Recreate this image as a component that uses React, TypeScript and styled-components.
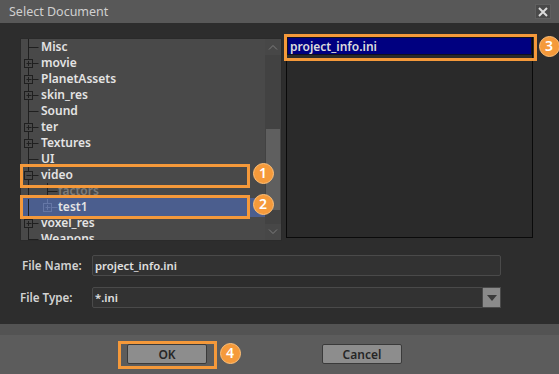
import React from 'react';
import styled, { createGlobalStyle } from 'styled-components';

const GlobalStyle = createGlobalStyle`
  html, body { margin: 0; padding: 0; background: #2d2d2d; }
  body { font-family: "Noto Sans", "DejaVu Sans", sans-serif; }
  * { box-sizing: border-box; }
`;

const Window = styled.div`
  position: relative;
  width: 559px;
  height: 374px;
  display: flex;
  flex-direction: column;
  background: #2d2d2d;
  overflow: hidden;
`;

const TitleBar = styled.div`
  flex: none;
  height: 23px;
  background: #585858;
  display: flex;
  align-items: center;
  justify-content: space-between;
  padding: 0 8px 0 9px;
  color: #d0d0d0;
  font-size: 12.5px;
`;

const CloseButton = styled.div`
  width: 16px;
  height: 15px;
  background: #4a4a4a;
  border: 1px solid #5f5f5f;
  display: flex;
  align-items: center;
  justify-content: center;
`;

const Body = styled.div`
  flex: 1;
  display: flex;
  flex-direction: column;
  padding: 13px 0 0 20px;
`;

const Panels = styled.div`
  display: flex;
  align-items: flex-start;
  gap: 4px;
`;

const TreePanel = styled.div`
  margin-top: 2px;
  width: 262px;
  height: 203px;
  border: 1px solid #2a2a2a;
  background: #494949;
  display: flex;
  overflow: hidden;
`;

const TreeList = styled.div`
  flex: 1;
  display: flex;
  flex-direction: column;
  overflow: hidden;
`;

const TreeRow = styled.div<{ $selected?: boolean; $dim?: boolean }>`
  flex: none;
  height: 16px;
  display: flex;
  align-items: center;
  background: ${(p) => (p.$selected ? '#4b5e8e' : 'transparent')};
  box-shadow: ${(p) => (p.$selected ? '0 -1px 0 #4b5e8e, 0 2px 0 #4b5e8e' : 'none')};
  color: ${(p) => (p.$dim ? '#7c7c7c' : '#e4e4e4')};
  font-size: 12px;
  font-weight: 600;
  line-height: 16px;
  white-space: nowrap;
`;

const Scrollbar = styled.div`
  flex: none;
  width: 16px;
  display: flex;
  flex-direction: column;
  background: #424242;
`;

const ScrollArrow = styled.div`
  flex: none;
  height: 16px;
  display: flex;
  align-items: center;
  justify-content: center;
  background: #474747;
`;

const ScrollTrack = styled.div`
  flex: 1;
  padding: 0 1px;
`;

const Thumb = styled.div<{ $offset: number; $size: number }>`
  margin-top: ${(p) => p.$offset}px;
  height: ${(p) => p.$size}px;
  background: #5f5f5f;
`;

const FileList = styled.div`
  width: 247px;
  height: 202px;
  border: 1px solid #0a0a0a;
  background: #2a2a2a;
  display: flex;
  flex-direction: column;
`;

const FileItem = styled.div<{ $selected?: boolean }>`
  height: 18px;
  display: flex;
  align-items: center;
  padding-left: 2px;
  background: ${(p) => (p.$selected ? '#000080' : 'transparent')};
  border: 1px solid ${(p) => (p.$selected ? '#101020' : 'transparent')};
  color: #dcdcdc;
  font-size: 12px;
  font-weight: 600;
`;

const Form = styled.div`
  margin-top: 14px;
  display: flex;
  flex-direction: column;
  gap: 11px;
`;

const FormRow = styled.div`
  display: flex;
  align-items: center;
  height: 21px;
`;

const Label = styled.div<{ $indent: number }>`
  width: 72px;
  padding-left: ${(p) => p.$indent}px;
  color: #d2d2d2;
  font-size: 11.6px;
  font-weight: 600;
  white-space: nowrap;
`;

const TextField = styled.div`
  width: 409px;
  height: 21px;
  border: 1px solid #4a4a4a;
  border-radius: 2px;
  background: #323232;
  display: flex;
  align-items: center;
  padding-left: 2px;
  color: #e0e0e0;
  font-size: 11.3px;
  font-weight: 600;
`;

const Combo = styled.div`
  width: 409px;
  height: 21px;
  display: flex;
`;

const ComboField = styled(TextField)`
  width: auto;
  flex: 1;
  border-radius: 2px 0 0 2px;
`;

const ComboButton = styled.div`
  width: 18px;
  height: 21px;
  background: #8a8a8a;
  border: 1px solid #4a4a4a;
  border-left: none;
  display: flex;
  align-items: center;
  justify-content: center;
`;

const ButtonBar = styled.div`
  flex: none;
  height: 50px;
  background: linear-gradient(#535353 0 11px, #5c5c5c 11px);
  display: flex;
  align-items: flex-start;
  padding: 20px 0 0 127px;
  gap: 115px;
`;

const Button = styled.div`
  width: 80px;
  height: 20px;
  background: #8d8d8d;
  border: 1px solid #3a3a3a;
  border-radius: 2px;
  display: flex;
  align-items: center;
  justify-content: center;
  color: #262626;
  font-size: 12px;
  font-weight: 600;
`;

const Callout = styled.div<{ $x: number; $y: number; $w: number; $h: number }>`
  position: absolute;
  left: ${(p) => p.$x}px;
  top: ${(p) => p.$y}px;
  width: ${(p) => p.$w}px;
  height: ${(p) => p.$h}px;
  border: 3px solid #f5993a;
  pointer-events: none;
`;

const Badge = styled.div<{ $cx: number; $cy: number }>`
  position: absolute;
  left: ${(p) => p.$cx - 10.5}px;
  top: ${(p) => p.$cy - 10.5}px;
  width: 21px;
  height: 21px;
  border-radius: 50%;
  background: #f59a3b;
  border: 1px solid #ffc078;
  color: #ffffff;
  font-size: 14px;
  font-weight: 600;
  display: flex;
  align-items: center;
  justify-content: center;
  line-height: 1;
`;

type Node = {
  label: string;
  level?: number;
  exp?: 'plus' | 'minus';
  dim?: boolean;
  selected?: boolean;
  last?: boolean;
};

const nodes: Node[] = [
  { label: 'Misc' },
  { label: 'movie', exp: 'plus' },
  { label: 'PlanetAssets', exp: 'plus' },
  { label: 'skin_res', exp: 'plus' },
  { label: 'Sound' },
  { label: 'ter', exp: 'plus' },
  { label: 'Textures', exp: 'plus' },
  { label: 'UI' },
  { label: 'video', exp: 'minus' },
  { label: 'factors', level: 1, dim: true },
  { label: 'test1', level: 1, exp: 'plus', selected: true, last: true },
  { label: 'voxel_res', exp: 'plus' },
  { label: 'Weapons' },
];

const LINE = '#1f1f1f';

function Gutter({ node }: { node: Node }) {
  const level = node.level ?? 0;
  const width = level === 0 ? 20 : 37;
  const cx = level === 0 ? 7.5 : 26.5;
  const stroke = node.selected ? '#6577a6' : LINE;
  return (
    <svg width={width} height={16} style={{ flex: 'none' }}>
      <line x1={7.5} y1={0} x2={7.5} y2={16} stroke={LINE} />
      {level === 1 && (
        <line x1={cx} y1={0} x2={cx} y2={node.last ? 8.5 : 16} stroke={stroke} />
      )}
      <line x1={cx} y1={8.5} x2={cx + 10} y2={8.5} stroke={stroke} />
      {node.exp && (
        <>
          <rect x={cx - 4} y={4.5} width={8} height={8} fill={node.selected ? '#4b5e8e' : '#494949'} stroke={stroke} />
          <line x1={cx - 2} y1={8.5} x2={cx + 3} y2={8.5} stroke={stroke} />
          {node.exp === 'plus' && <line x1={cx} y1={6} x2={cx} y2={11} stroke={stroke} />}
        </>
      )}
    </svg>
  );
}

export default function App() {
  return (
    <Window>
      <GlobalStyle />
      <TitleBar>
        <span>Select Document</span>
        <CloseButton>
          <svg width="10" height="10" viewBox="0 0 10 10">
            <path d="M1 1 L9 9 M9 1 L1 9" stroke="#dcdcdc" strokeWidth="2" />
          </svg>
        </CloseButton>
      </TitleBar>
      <Body>
        <Panels>
          <TreePanel>
            <TreeList>
              {nodes.map((n) => (
                <TreeRow key={n.label} $selected={n.selected} $dim={n.dim}>
                  <Gutter node={n} />
                  <span>{n.label}</span>
                </TreeRow>
              ))}
            </TreeList>
            <Scrollbar>
              <ScrollArrow>
                <svg width="10" height="6" viewBox="0 0 10 6">
                  <path d="M1 5.5 L5 1.5 L9 5.5" fill="none" stroke="#7d7d7d" />
                </svg>
              </ScrollArrow>
              <ScrollTrack>
                <Thumb $offset={74} $size={81} />
              </ScrollTrack>
              <ScrollArrow>
                <svg width="10" height="6" viewBox="0 0 10 6">
                  <path d="M1 0.5 L5 4.5 L9 0.5" fill="none" stroke="#7d7d7d" />
                </svg>
              </ScrollArrow>
            </Scrollbar>
          </TreePanel>
          <FileList>
            <FileItem $selected>project_info.ini</FileItem>
          </FileList>
        </Panels>
        <Form>
          <FormRow>
            <Label $indent={2}>File Name:</Label>
            <TextField>project_info.ini</TextField>
          </FormRow>
          <FormRow>
            <Label $indent={0}>File Type:</Label>
            <Combo>
              <ComboField>*.ini</ComboField>
              <ComboButton>
                <svg width="10" height="6" viewBox="0 0 10 6">
                  <path d="M0 0 L10 0 L5 6 Z" fill="#3a3a3a" />
                </svg>
              </ComboButton>
            </Combo>
          </FormRow>
        </Form>
      </Body>
      <ButtonBar>
        <Button>OK</Button>
        <Button>Cancel</Button>
      </ButtonBar>

      <Callout $x={20} $y={164} $w={230} $h={24} />
      <Callout $x={20} $y={195} $w={230} $h={24} />
      <Callout $x={284} $y={34} $w={253} $h={27} />
      <Callout $x={118} $y={341} $w={99} $h={28} />
      <Badge $cx={263} $cy={173}>1</Badge>
      <Badge $cx={263} $cy={204}>2</Badge>
      <Badge $cx={549} $cy={46}>3</Badge>
      <Badge $cx={230} $cy={353}>4</Badge>
    </Window>
  );
}
